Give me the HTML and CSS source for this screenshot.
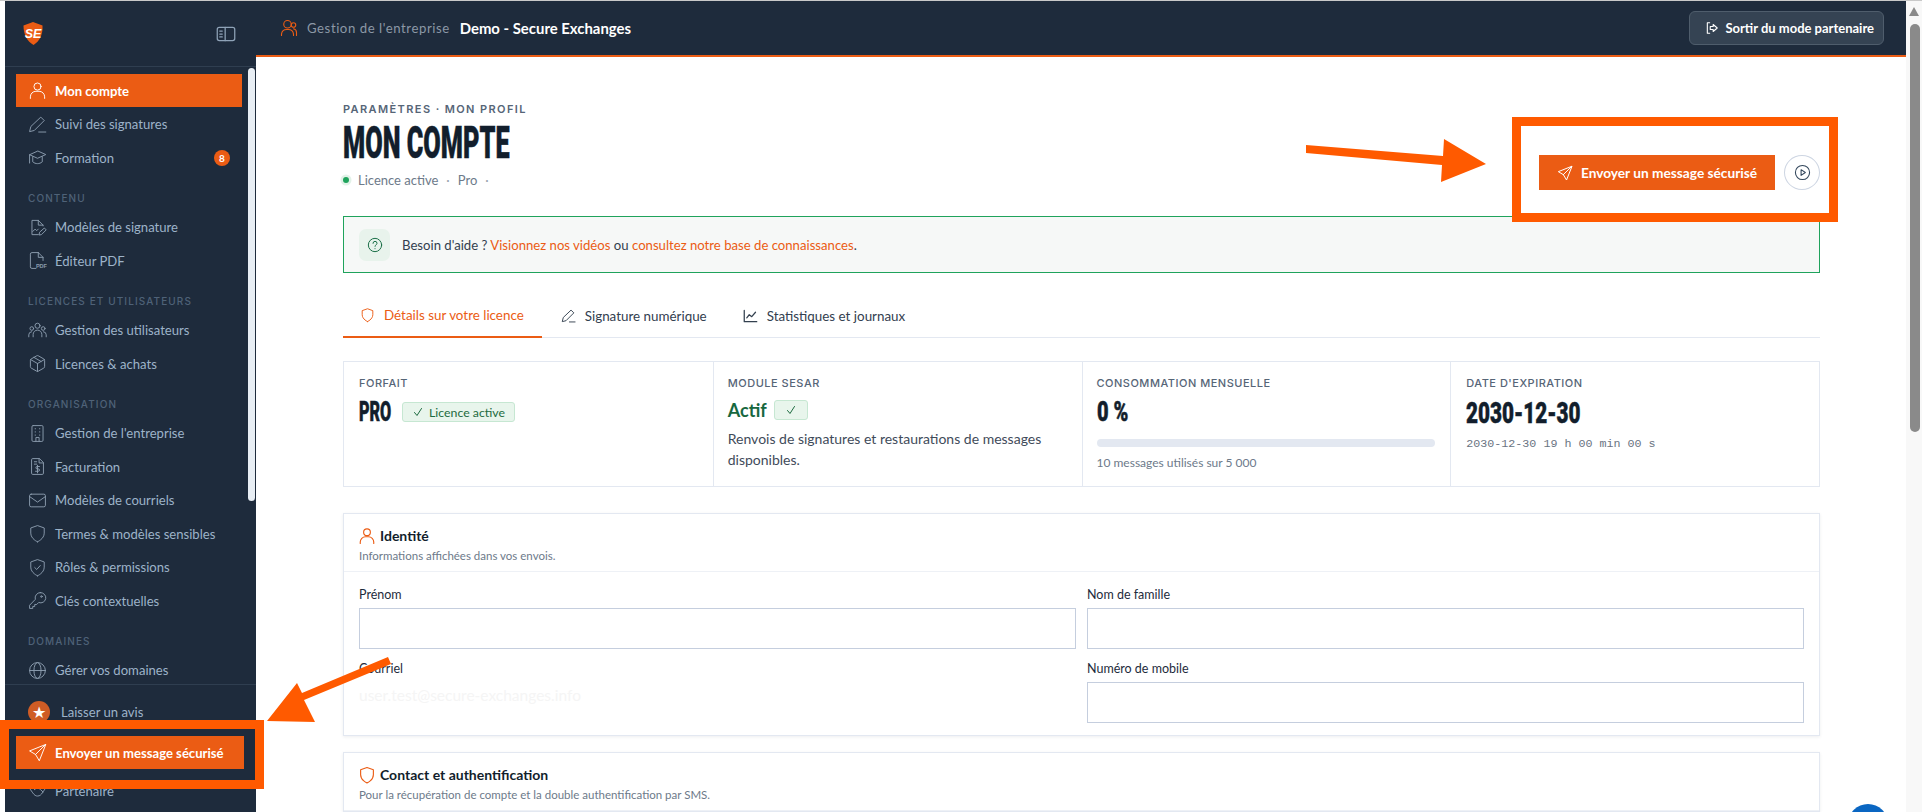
FILE: index.html
```html
<!DOCTYPE html>
<html lang="fr">
<head>
    <meta charset="UTF-8">
    <title>Mon compte</title>
    <link rel="stylesheet" href="styles.css">
</head>
<body>
    <svg class="icon-defs" width="0" height="0">
        <symbol id="i-user" viewBox="0 0 24 24"><circle cx="12" cy="7" r="4.5"/><path d="M3 22v-2a7 7 0 0 1 7-7h4a7 7 0 0 1 7 7v2"/></symbol>
        <symbol id="i-pen" viewBox="0 0 24 24"><path d="M16.5 3l4 4L8 19.5l-6 1.5 1.5-6zM13.5 21.5h9"/></symbol>
        <symbol id="i-cap" viewBox="0 0 24 24"><path d="M12 4L2 8.500l10 4.500 10-4.500zM2 8.500V19M6 11v6.500c3.500 3 8.500 3 12 0V11"/></symbol>
        <symbol id="i-filesign" viewBox="0 0 24 24"><path d="M13 3H5v18h8M13 3l6 6v1M13 3v6h6M6 17l3-3 2 2 2-2M21 13l2 2-6 6-3 .5.500-3z"/></symbol>
        <symbol id="i-filepdf" viewBox="0 0 24 24"><path d="M13 2H5a2 2 0 0 0-2 2v16a2 2 0 0 0 2 2h5M13 2l6 6v4M13 2v6h6"/></symbol>
        <symbol id="i-users" viewBox="0 0 24 24"><circle cx="12" cy="6" r="3.200"/><circle cx="4.800" cy="9.500" r="2.300"/><circle cx="19.200" cy="9.500" r="2.300"/><path d="M6.500 20v-3a5.500 5.500 0 0 1 11 0v3M1 20v-2.500a4 4 0 0 1 3.500-4M23 20v-2.500a4 4 0 0 0-3.500-4"/></symbol>
        <symbol id="i-partner" viewBox="0 0 24 24"><circle cx="10" cy="7" r="5"/><circle cx="18" cy="8" r="3"/><path d="M2 22v-2a7 7 0 0 1 7-6h2a7 7 0 0 1 7 6v2M18 13a5 5 0 0 1 4 5v4"/></symbol>
        <symbol id="i-box" viewBox="0 0 24 24"><path d="M21 8a2 2 0 0 0-1-1.730l-7-4a2 2 0 0 0-2 0l-7 4A2 2 0 0 0 3 8v8a2 2 0 0 0 1 1.730l7 4a2 2 0 0 0 2 0l7-4A2 2 0 0 0 21 16zM3.300 7L12 12l8.700-5M12 22V12M7.500 4.270l9 5.150"/></symbol>
        <symbol id="i-building" viewBox="0 0 24 24"><rect x="5" y="2" width="14" height="20" rx="1.500"/><path d="M10 22v-5h4v5M9 6h.5M14.500 6h.5M9 10h.5M14.500 10h.5M9 14h.5M14.500 14h.5"/></symbol>
        <symbol id="i-invoice" viewBox="0 0 24 24"><path d="M14 2H6a1.500 1.500 0 0 0-1.500 1.500v17A1.500 1.500 0 0 0 6 22h12a1.500 1.500 0 0 0 1.500-1.500V7.500zM14 2v5.500h5.500M8 6h3M8 9h3M14.500 12h-3a1.500 1.500 0 0 0 0 3h1.500a1.500 1.500 0 0 1 0 3H9.500M12 10.500V20"/></symbol>
        <symbol id="i-mail" viewBox="0 0 24 24"><rect x="2" y="4" width="20" height="16" rx="2"/><path d="M2 7l10 7 10-7"/></symbol>
        <symbol id="i-shield" viewBox="0 0 24 24"><path d="M12 22.500s8.500-3.500 8.500-11V5L12 2 3.500 5v6.500c0 7.500 8.500 11 8.500 11z"/></symbol>
        <symbol id="i-shieldcheck" viewBox="0 0 24 24"><path d="M12 22.500s8.500-3.500 8.500-11V5L12 2 3.500 5v6.500c0 7.500 8.500 11 8.500 11zM8.500 12l2.500 2.500 4.500-5"/></symbol>
        <symbol id="i-key" viewBox="0 0 24 24"><path d="M15.500 2a6.500 6.500 0 0 0-6.200 8.500L2 18v4h4v-2.500h2.500V17H11l2.500-2.500A6.500 6.500 0 1 0 15.500 2z"/><circle cx="17" cy="7" r="1"/></symbol>
        <symbol id="i-globe" viewBox="0 0 24 24"><circle cx="12" cy="12" r="10"/><ellipse cx="12" cy="12" rx="4.500" ry="10"/><path d="M2 12h20"/></symbol>
        <symbol id="i-send" viewBox="0 0 24 24"><path d="M22 2L2 10l7.500 4.500L14 22zM22 2L9.500 14.500"/></symbol>
        <symbol id="i-hands" viewBox="0 0 24 24"><path d="M1 8l5 7c2 3 4 4 6 4 3 0 5-2 6-4l5-7M8 11l4-3 4 3 3 3"/></symbol>
        <symbol id="i-panel" viewBox="0 0 24 24"><rect x="1.500" y="4" width="21" height="16" rx="2.500"/><path d="M11 4v16M4.500 8.500h3M4.500 12h3M4.500 15.500h3"/></symbol>
        <symbol id="i-exit" viewBox="0 0 24 24"><path d="M8 3H4v18h4M9 9.500h5V6l7 6-7 6v-3.500H9z"/></symbol>
        <symbol id="i-play" viewBox="0 0 24 24"><circle cx="12" cy="12" r="10"/><path d="M10 8l6 4-6 4z"/></symbol>
        <symbol id="i-help" viewBox="0 0 24 24"><circle cx="12" cy="12" r="10"/><path d="M9 9.500a3 3 0 0 1 6 0c0 2-3 2.500-3 4.500M12 17.500v.1"/></symbol>
        <symbol id="i-chart" viewBox="0 0 24 24"><path d="M2 3v18h20M6 15l4-5 4 3 6-7"/></symbol>
        <symbol id="i-check" viewBox="0 0 24 24"><path d="M5 13l5 6L19 5"/></symbol>
    </svg>

    <div class="app">
        <!-- Sidebar -->
        <aside class="sidebar">
            <div class="side-head">
                <svg class="logo" viewBox="0 0 20 23"><path class="logo-shield" d="M10 0l9.500 3.500c.5 8.500-2.500 15.500-9 19.500C3.500 19 .5 12 .5 3.500z"/><text class="logo-text" x="10" y="15.500" text-anchor="middle">SE</text></svg>
                <svg class="ico panel-toggle"><use href="#i-panel"/></svg>
            </div>
            <div class="side-thumb"></div>
            <nav class="side-nav">
                <a class="nav-item active"><svg class="ico"><use href="#i-user"/></svg>Mon compte</a>
                <a class="nav-item"><svg class="ico"><use href="#i-pen"/></svg>Suivi des signatures</a>
                <a class="nav-item"><svg class="ico"><use href="#i-cap"/></svg>Formation<span class="nav-badge">8</span></a>

                <div class="nav-label">CONTENU</div>
                <a class="nav-item"><svg class="ico"><use href="#i-filesign"/></svg>Modèles de signature</a>
                <a class="nav-item"><svg class="ico" viewBox="0 0 24 24"><use href="#i-filepdf"/><text class="pdf-tag" x="10" y="22">PDF</text></svg>Éditeur PDF</a>

                <div class="nav-label">LICENCES ET UTILISATEURS</div>
                <a class="nav-item"><svg class="ico"><use href="#i-users"/></svg>Gestion des utilisateurs</a>
                <a class="nav-item"><svg class="ico"><use href="#i-box"/></svg>Licences &amp; achats</a>

                <div class="nav-label">ORGANISATION</div>
                <a class="nav-item"><svg class="ico"><use href="#i-building"/></svg>Gestion de l'entreprise</a>
                <a class="nav-item"><svg class="ico"><use href="#i-invoice"/></svg>Facturation</a>
                <a class="nav-item"><svg class="ico"><use href="#i-mail"/></svg>Modèles de courriels</a>
                <a class="nav-item"><svg class="ico"><use href="#i-shield"/></svg>Termes &amp; modèles sensibles</a>
                <a class="nav-item"><svg class="ico"><use href="#i-shieldcheck"/></svg>Rôles &amp; permissions</a>
                <a class="nav-item"><svg class="ico"><use href="#i-key"/></svg>Clés contextuelles</a>

                <div class="nav-label">DOMAINES</div>
                <a class="nav-item"><svg class="ico"><use href="#i-globe"/></svg>Gérer vos domaines</a>
            </nav>
            <div class="side-foot">
                <a class="nav-item review"><span class="star">★</span>Laisser un avis</a>
                <a class="nav-item active foot-send"><svg class="ico"><use href="#i-send"/></svg>Envoyer un message sécurisé</a>
                <a class="nav-item"><svg class="ico"><use href="#i-hands"/></svg>Partenaire</a>
            </div>
        </aside>

        <div class="right">
            <!-- Top bar -->
            <header class="topbar">
                <svg class="ico top-ico"><use href="#i-partner"/></svg>
                <span class="top-crumb">Gestion de l'entreprise</span>
                <span class="top-name">Demo - Secure Exchanges</span>
                <a class="top-btn"><svg class="ico"><use href="#i-exit"/></svg>Sortir du mode partenaire</a>
            </header>

            <main class="content">
                <div class="page-head">
                    <div>
                        <div class="eyebrow">PARAMÈTRES · MON PROFIL</div>
                        <h1 class="title"><span class="squeeze">MON COMPTE</span></h1>
                        <div class="status"><span class="dot"></span>Licence active<i>·</i>Pro<i>·</i></div>
                    </div>
                    <div class="head-actions">
                        <a class="send-btn"><svg class="ico"><use href="#i-send"/></svg>Envoyer un message sécurisé</a>
                        <a class="play-btn"><svg class="ico"><use href="#i-play"/></svg></a>
                    </div>
                </div>

                <div class="help">
                    <span class="help-ico"><svg class="ico"><use href="#i-help"/></svg></span>
                    <p>Besoin d'aide ? <a>Visionnez nos vidéos</a> ou <a>consultez notre base de connaissances</a>.</p>
                </div>

                <div class="tabs">
                    <a class="tab on"><svg class="ico"><use href="#i-shield"/></svg>Détails sur votre licence</a>
                    <a class="tab"><svg class="ico"><use href="#i-pen"/></svg>Signature numérique</a>
                    <a class="tab"><svg class="ico tab-chart"><use href="#i-chart"/></svg>Statistiques et journaux</a>
                </div>

                <div class="stats">
                    <div class="stat">
                        <div class="stat-label">FORFAIT</div>
                        <div class="stat-row"><span class="squeeze big big-pro">PRO</span><span class="pill"><svg class="ico"><use href="#i-check"/></svg>Licence active</span></div>
                    </div>
                    <div class="stat">
                        <div class="stat-label">MODULE SESAR</div>
                        <div class="stat-row actif-row"><b class="actif">Actif</b><span class="pill pill-sq"><svg class="ico"><use href="#i-check"/></svg></span></div>
                        <p class="stat-text">Renvois de signatures et restaurations de messages disponibles.</p>
                    </div>
                    <div class="stat">
                        <div class="stat-label">CONSOMMATION MENSUELLE</div>
                        <div class="stat-row"><span class="squeeze big big-pct">0 %</span></div>
                        <div class="bar"></div>
                        <div class="stat-sub">10 messages utilisés sur 5 000</div>
                    </div>
                    <div class="stat">
                        <div class="stat-label">DATE D'EXPIRATION</div>
                        <div class="stat-row"><span class="squeeze big big-date">2030-12-30</span></div>
                        <div class="stat-mono">2030-12-30 19 h 00 min 00 s</div>
                    </div>
                </div>

                <section class="card">
                    <div class="card-head">
                        <h2><svg class="ico"><use href="#i-user"/></svg>Identité</h2>
                        <p>Informations affichées dans vos envois.</p>
                    </div>
                    <div class="form">
                        <div class="field"><label>Prénom</label><div class="input"></div></div>
                        <div class="field"><label>Nom de famille</label><div class="input"></div></div>
                        <div class="field"><label>Courriel</label><div class="readonly">user.test@secure-exchanges.info</div></div>
                        <div class="field"><label>Numéro de mobile</label><div class="input"></div></div>
                    </div>
                </section>

                <section class="card">
                    <div class="card-head">
                        <h2><svg class="ico"><use href="#i-shield"/></svg>Contact et authentification</h2>
                        <p>Pour la récupération de compte et la double authentification par SMS.</p>
                    </div>
                </section>
            </main>
        </div>

        <div class="page-scroll"><span class="scroll-up"></span><span class="scroll-thumb"></span></div>
    </div>

    <div class="chat-bubble"></div>

    <!-- Annotations over the screenshot -->
    <div class="frame frame-top"></div>
    <div class="frame frame-side"></div>
    <svg class="arrows" viewBox="0 0 1922 812">
        <polygon points="1306,145 1443,156 1444,139 1486,164 1441,182 1442,165 1306,153"/>
        <polygon points="388,657 391,664 304,700 315,722 267,721 297,683 302,693"/>
    </svg>
</body>
</html>
```
FILE: styles.css
```css
* {
    box-sizing: border-box;
}
html, body {
    margin: 0;
    height: 812px;
    overflow: hidden;
}
body {
    font-family: Lato, "Noto Sans", sans-serif;
    background: #fff;
    color: #1e2b3c;
    position: relative;
}
a {
    text-decoration: none;
}
p, h1, h2 {
    margin: 0;
}
.icon-defs {
    position: absolute;
}
.ico {
    width: 18px;
    height: 18px;
    flex: none;
    fill: none;
    stroke: currentColor;
    stroke-width: 1.5;
    stroke-linecap: round;
    stroke-linejoin: round;
}

.app {
    display: flex;
    height: 812px;
    padding-left: 5px;
    border-top: 1px solid #c9c9c9;
}

/* Sidebar */
.sidebar {
    width: 251px;
    flex: none;
    background: #1e2b3c;
    display: flex;
    flex-direction: column;
    position: relative;
    overflow: hidden;
}
.side-head {
    height: 66px;
    flex: none;
    display: flex;
    align-items: center;
    justify-content: space-between;
    padding: 0 20px 0 18px;
    border-bottom: 1px solid #2f3e50;
}
.logo {
    width: 20px;
    height: 23px;
}
.logo-shield {
    fill: #eb5c14;
}
.logo-text {
    fill: #fff;
    font: italic 700 12.5px "Liberation Sans", sans-serif;
}
.panel-toggle {
    color: #8fa3b8;
    width: 20px;
    height: 20px;
}
.side-thumb {
    position: absolute;
    left: 243px;
    top: 67px;
    width: 7px;
    height: 433px;
    border-radius: 4px;
    background: #e8eef4;
}
.side-nav {
    flex: 1;
    min-height: 0;
    overflow: hidden;
    padding: 7px 14px 0 11px;
}
.nav-item {
    height: 33px;
    margin-bottom: .5px;
    display: flex;
    align-items: center;
    gap: 8px;
    padding-left: 12px;
    font-size: 13.100px;
    color: #9db3c9;
}
.nav-item .ico {
    width: 19px;
    height: 19px;
    stroke-width: 1.2;
    color: #8b9cae;
}
.nav-item.active {
    background: #eb5c14;
    color: #fff;
    font-weight: 700;
}
.nav-item.active .ico {
    color: #fff;
}
.pdf-tag {
    fill: #8b9cae;
    stroke: none;
    font: 700 7px "Liberation Sans", sans-serif;
}
.nav-badge {
    margin-left: auto;
    margin-right: 12px;
    width: 16px;
    height: 16px;
    border-radius: 50%;
    background: #eb5c14;
    color: #fff;
    font-size: 10px;
    font-weight: 700;
    display: flex;
    align-items: center;
    justify-content: center;
}
.nav-label {
    font-family: Inter, sans-serif;
    font-size: 10px;
    font-weight: 500;
    letter-spacing: 1.1px;
    line-height: 16px;
    color: #4f6278;
    padding: 15px 0 5px 12px;
    white-space: nowrap;
}
.side-foot {
    flex: none;
    height: 128px;
    border-top: 1px solid #2f3e50;
    padding: 10px 12px 0 11px;
}
.review {
    height: 33px;
    margin-bottom: 8px;
    gap: 11px;
}
.foot-send {
    margin-bottom: 5px;
}
.star {
    width: 22px;
    height: 22px;
    border-radius: 50%;
    background: #cf5c25;
    color: #fff;
    font-size: 16px;
    display: flex;
    align-items: center;
    justify-content: center;
}

/* Right column */
.right {
    flex: 1;
    min-width: 0;
    display: flex;
    flex-direction: column;
}
.topbar {
    height: 56px;
    flex: none;
    background: #1e2b3c;
    border-bottom: 2px solid #eb5c14;
    display: flex;
    align-items: center;
    padding: 0 22px 0 24px;
}
.top-ico {
    color: #eb5c14;
    width: 18px;
    height: 20px;
}
.top-crumb {
    margin-left: 9px;
    font-size: 13.200px;
    letter-spacing: .55px;
    color: #8c98a6;
}
.top-name {
    margin-left: 10px;
    font-size: 14.900px;
    font-weight: 700;
    color: #fff;
}
.top-btn {
    margin-left: auto;
    height: 34px;
    padding: 0 9px 0 15px;
    display: flex;
    align-items: center;
    gap: 6px;
    background: #354353;
    border: 1px solid #4f5d6c;
    border-radius: 6px;
    color: #fff;
    font-size: 13px;
    font-weight: 700;
}
.top-btn .ico {
    width: 14px;
    height: 14px;
    stroke-width: 1.9;
}

.content {
    flex: 1;
    min-height: 0;
    overflow: hidden;
    padding: 45px 86px 0 87px;
}
.page-head {
    display: flex;
    justify-content: space-between;
    height: 114px;
}
.eyebrow {
    font-family: Inter, sans-serif;
    font-size: 11px;
    font-weight: 600;
    letter-spacing: 1.4px;
    line-height: 14px;
    color: #566577;
}
.squeeze {
    display: inline-block;
    font-family: Roboto, sans-serif;
    font-weight: 900;
    -webkit-text-stroke: .5px currentColor;
    transform-origin: left center;
    white-space: nowrap;
}
.title {
    height: 50px;
    line-height: 50px;
    font-size: 44px;
    color: #121e2c;
}
.title .squeeze {
    transform: scaleX(.575);
}
.status {
    display: flex;
    align-items: center;
    font-size: 13px;
    color: #6d7a8a;
    line-height: 22px;
    margin-top: 3px;
}
.status i {
    font-style: normal;
    margin: 0 8px;
    color: #9aa5b1;
}
.dot {
    width: 6px;
    height: 6px;
    border-radius: 50%;
    background: #1fa35c;
    box-shadow: 0 0 0 2.500px #e2f2e8;
    margin-right: 9px;
}
.head-actions {
    display: flex;
    gap: 9px;
    margin-top: 53px;
    align-items: flex-start;
}
.send-btn {
    width: 236px;
    height: 35px;
    background: #eb5c14;
    color: #fff;
    font-size: 13.700px;
    font-weight: 700;
    display: flex;
    align-items: center;
    justify-content: center;
    gap: 8px;
}
.send-btn .ico {
    width: 16px;
    height: 16px;
}
.play-btn {
    width: 36px;
    height: 35px;
    border: 1px solid #cdd5e2;
    border-radius: 50%;
    display: flex;
    align-items: center;
    justify-content: center;
    color: #33475c;
}
.play-btn .ico {
    width: 17px;
    height: 17px;
}

.help {
    height: 57px;
    border: 1px solid #1fa35c;
    background: #f6f8f7;
    display: flex;
    align-items: center;
    padding-left: 15px;
    gap: 12px;
    font-size: 13.150px;
    color: #33404f;
}
.help a {
    color: #eb5c14;
}
.help-ico {
    width: 31px;
    height: 32px;
    border-radius: 7px;
    background: #e8f3ec;
    color: #1a6f47;
    display: flex;
    align-items: center;
    justify-content: center;
}
.help-ico .ico {
    width: 16px;
    height: 16px;
}

.tabs {
    margin-top: 21px;
    height: 44px;
    display: flex;
    border-bottom: 1px solid #e3e8f1;
}
.tab {
    height: 44px;
    padding: 0 17px 0 19px;
    display: flex;
    align-items: center;
    gap: 9px;
    font-size: 13.400px;
    color: #33404f;
}
.tab .ico {
    width: 15px;
    height: 16px;
}
.tab .tab-chart {
    stroke-width: 2;
}
.tab.on {
    padding: 0 18px 0 17px;
    color: #eb5c14;
    border-bottom: 2px solid #eb5c14;
}

.stats {
    margin-top: 23px;
    height: 126px;
    display: grid;
    grid-template-columns: repeat(4, 1fr);
    border: 1px solid #e3e8f1;
}
.stat {
    padding: 14px 15px 0 14px;
    border-left: 1px solid #e3e8f1;
    min-width: 0;
}
.stat:first-child {
    border-left: 0;
    padding-left: 15px;
}
.stat:last-child {
    padding-left: 15px;
}
.stat-label {
    font-family: Inter, sans-serif;
    font-size: 11px;
    font-weight: 500;
    letter-spacing: .5px;
    line-height: 14px;
    color: #566577;
}
.stat-row {
    display: flex;
    align-items: center;
    height: 30px;
    margin-top: 7px;
}
.big {
    font-size: 27px;
    color: #121e2c;
    transform: scaleX(.6);
}
.big-pro {
    width: 33px;
    margin-right: 10px;
}
.big-pct {
    transform: scaleX(.74);
}
.big-date {
    font-size: 30px;
    transform: scaleX(.69);
}
.actif-row {
    height: 26px;
}
.actif {
    font-size: 18px;
    font-weight: 700;
    color: #17683f;
    margin-right: 7px;
}
.pill {
    height: 20px;
    padding: 0 9px;
    display: flex;
    align-items: center;
    gap: 5px;
    background: #e8f5ec;
    border: 1px solid #c6e7d2;
    border-radius: 3px;
    font-size: 12.300px;
    color: #1d6b40;
}
.pill .ico {
    width: 12px;
    height: 12px;
    stroke-width: 2;
}
.pill-sq {
    padding: 0 10px;
}
.stat-text {
    margin-top: 5px;
    font-size: 14px;
    line-height: 21px;
    color: #3f4b5a;
}
.bar {
    margin-top: 12px;
    height: 8px;
    border-radius: 4px;
    background: #e3e8f1;
}
.stat-sub {
    margin-top: 8px;
    font-size: 12px;
    color: #6d7a8a;
}
.stat-mono {
    margin-top: 10px;
    font-family: "Liberation Mono", monospace;
    font-size: 11.700px;
    color: #6a7482;
}

.card {
    margin-top: 26px;
    border: 1px solid #e3e8f1;
    box-shadow: 0 1px 3px rgba(30, 43, 60, .08);
}
.card + .card {
    margin-top: 16px;
}
.card-head {
    height: 58px;
    padding: 11px 15px 0;
    border-bottom: 1px solid #eef1f6;
}
.card-head h2 {
    display: flex;
    align-items: center;
    gap: 4px;
    font-size: 14px;
    font-weight: 700;
    line-height: 22px;
    color: #121e2c;
}
.card-head h2 .ico {
    width: 18px;
    height: 18px;
    margin-left: -1px;
    color: #eb5c14;
}
.card-head p {
    font-size: 11.500px;
    line-height: 18px;
    color: #6d7a8a;
}
.form {
    display: grid;
    grid-template-columns: 1fr 1fr;
    column-gap: 11px;
    row-gap: 10px;
    padding: 13px 15px 12px;
}
.field label {
    display: block;
    font-size: 12.500px;
    line-height: 20px;
    margin-bottom: 3px;
    color: #1e2b3c;
}
.input {
    height: 41px;
    border: 1px solid #c5cede;
}
.readonly {
    height: 41px;
    padding-top: 4px;
    font-size: 15.500px;
    color: #f5f5f5;
}

/* Page scrollbar */
.page-scroll {
    width: 16px;
    flex: none;
    background: #f8f8f8;
    position: relative;
}
.scroll-up {
    position: absolute;
    left: 3px;
    top: 6px;
    border: 5px solid transparent;
    border-top: 0;
    border-bottom: 9px solid #8a8a8a;
}
.scroll-thumb {
    position: absolute;
    left: 4px;
    top: 23px;
    width: 10px;
    height: 408px;
    border-radius: 5px;
    background: #8a8a8a;
}

.chat-bubble {
    position: absolute;
    left: 1848px;
    top: 804px;
    width: 40px;
    height: 40px;
    border-radius: 50%;
    background: #0a66c2;
}

/* Annotations */
.frame {
    position: absolute;
    border: 9px solid #ff5a00;
}
.frame-top {
    left: 1512px;
    top: 117px;
    width: 326px;
    height: 105px;
}
.frame-side {
    left: 0;
    top: 720px;
    width: 264px;
    height: 69px;
}
.arrows {
    position: absolute;
    left: 0;
    top: 0;
    width: 1922px;
    height: 812px;
    fill: #ff5a00;
    pointer-events: none;
}
```
